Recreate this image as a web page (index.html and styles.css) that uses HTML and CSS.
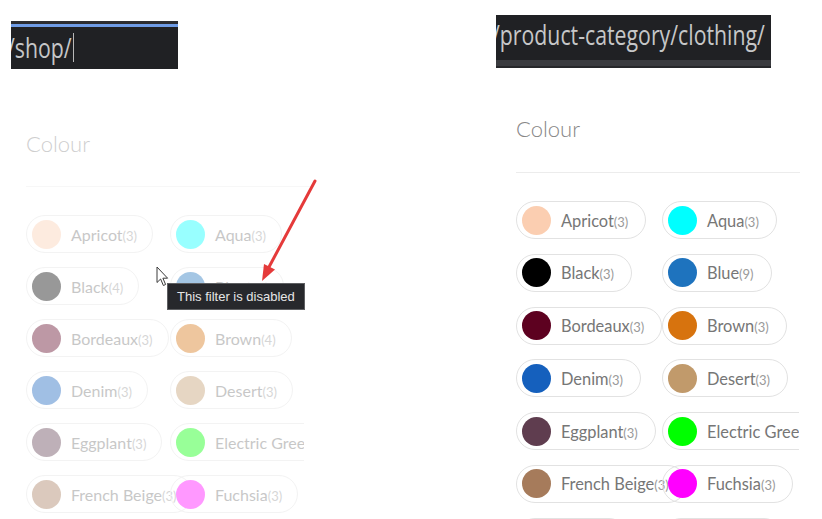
FILE: index.html
```html
<!DOCTYPE html>
<html lang="en">
<head>
    <meta charset="UTF-8">
    <meta name="viewport" content="width=device-width, initial-scale=1.0">
    <title>Colour filter - disabled vs active</title>
    <link rel="stylesheet" href="styles.css">
</head>
<body>
    <main class="compare">
        <!-- /shop/ : filter disabled -->
        <section class="shot shot-left">
            <div class="urlbar urlbar-focused">
                <span class="url">/shop/</span>
            </div>
            <span class="caret"></span>

            <div class="widget widget-disabled">
                <h3 class="widget-title">Colour</h3>
                <ul class="swatches">
                    <li><span class="pill"><span class="dot" style="background:#fbceb1"></span><span class="label"><span class="name">Apricot</span><span class="count">(3)</span></span></span></li>
                    <li><span class="pill"><span class="dot" style="background:#00ffff"></span><span class="label"><span class="name">Aqua</span><span class="count">(3)</span></span></span></li>
                    <li><span class="pill"><span class="dot" style="background:#000000"></span><span class="label"><span class="name">Black</span><span class="count">(4)</span></span></span></li>
                    <li><span class="pill"><span class="dot" style="background:#1e73be"></span><span class="label"><span class="name">Blue</span><span class="count">(10)</span></span></span></li>
                    <li><span class="pill"><span class="dot" style="background:#5d0120"></span><span class="label"><span class="name">Bordeaux</span><span class="count">(3)</span></span></span></li>
                    <li><span class="pill"><span class="dot" style="background:#d7730e"></span><span class="label"><span class="name">Brown</span><span class="count">(4)</span></span></span></li>
                    <li><span class="pill"><span class="dot" style="background:#1560bd"></span><span class="label"><span class="name">Denim</span><span class="count">(3)</span></span></span></li>
                    <li><span class="pill"><span class="dot" style="background:#c19a6b"></span><span class="label"><span class="name">Desert</span><span class="count">(3)</span></span></span></li>
                    <li><span class="pill"><span class="dot" style="background:#5f3d4f"></span><span class="label"><span class="name">Eggplant</span><span class="count">(3)</span></span></span></li>
                    <li><span class="pill"><span class="dot" style="background:#00ff00"></span><span class="label"><span class="name">Electric Green</span><span class="count">(3)</span></span></span></li>
                    <li><span class="pill"><span class="dot" style="background:#a67b5b"></span><span class="label"><span class="name">French Beige</span><span class="count">(3)</span></span></span></li>
                    <li><span class="pill"><span class="dot" style="background:#ff00ff"></span><span class="label"><span class="name">Fuchsia</span><span class="count">(3)</span></span></span></li>
                    <li><span class="pill"><span class="dot" style="background:#808080"></span><span class="label"><span class="name">Gray</span><span class="count">(3)</span></span></span></li>
                    <li><span class="pill"><span class="dot" style="background:#3cb371"></span><span class="label"><span class="name">Green</span><span class="count">(3)</span></span></span></li>
                </ul>
            </div>

            <svg class="cursor" width="13" height="21" viewBox="0 0 13 21">
                <path d="M1 1 L1 16.5 L4.6 13 L7.4 19.5 L9.6 18.5 L6.9 12.2 L11.6 12.2 Z" fill="#fff" stroke="#3a3a3a" stroke-width="1" stroke-linejoin="round"/>
            </svg>

            <svg class="pointer-arrow" width="66" height="112" viewBox="0 0 66 112">
                <line x1="60" y1="6" x2="14" y2="92" stroke="#e53a3a" stroke-width="3" stroke-linecap="round"/>
                <polygon points="7,106 20,94.5 9,89" fill="#e53a3a"/>
            </svg>

            <div class="tooltip">This filter is disabled</div>
        </section>

        <!-- /product-category/clothing/ : filter active -->
        <section class="shot shot-right">
            <div class="urlbar urlbar-plain">
                <span class="url">/product-category/clothing/</span>
            </div>

            <div class="widget">
                <h3 class="widget-title">Colour</h3>
                <ul class="swatches">
                    <li><span class="pill"><span class="dot" style="background:#fbceb1"></span><span class="label"><span class="name">Apricot</span><span class="count">(3)</span></span></span></li>
                    <li><span class="pill"><span class="dot" style="background:#00ffff"></span><span class="label"><span class="name">Aqua</span><span class="count">(3)</span></span></span></li>
                    <li><span class="pill"><span class="dot" style="background:#000000"></span><span class="label"><span class="name">Black</span><span class="count">(3)</span></span></span></li>
                    <li><span class="pill"><span class="dot" style="background:#1e73be"></span><span class="label"><span class="name">Blue</span><span class="count">(9)</span></span></span></li>
                    <li><span class="pill"><span class="dot" style="background:#5d0120"></span><span class="label"><span class="name">Bordeaux</span><span class="count">(3)</span></span></span></li>
                    <li><span class="pill"><span class="dot" style="background:#d7730e"></span><span class="label"><span class="name">Brown</span><span class="count">(3)</span></span></span></li>
                    <li><span class="pill"><span class="dot" style="background:#1560bd"></span><span class="label"><span class="name">Denim</span><span class="count">(3)</span></span></span></li>
                    <li><span class="pill"><span class="dot" style="background:#c19a6b"></span><span class="label"><span class="name">Desert</span><span class="count">(3)</span></span></span></li>
                    <li><span class="pill"><span class="dot" style="background:#5f3d4f"></span><span class="label"><span class="name">Eggplant</span><span class="count">(3)</span></span></span></li>
                    <li><span class="pill"><span class="dot" style="background:#00ff00"></span><span class="label"><span class="name">Electric Green</span><span class="count">(3)</span></span></span></li>
                    <li><span class="pill"><span class="dot" style="background:#a67b5b"></span><span class="label"><span class="name">French Beige</span><span class="count">(3)</span></span></span></li>
                    <li><span class="pill"><span class="dot" style="background:#ff00ff"></span><span class="label"><span class="name">Fuchsia</span><span class="count">(3)</span></span></span></li>
                    <li><span class="pill"><span class="dot" style="background:#808080"></span><span class="label"><span class="name">Gray</span><span class="count">(3)</span></span></span></li>
                    <li><span class="pill"><span class="dot" style="background:#3cb371"></span><span class="label"><span class="name">Green</span><span class="count">(3)</span></span></span></li>
                </ul>
            </div>
        </section>
    </main>
</body>
</html>
```

FILE: styles.css
```css
html, body {
    margin: 0;
    padding: 0;
    background-color: #fff;
}

body {
    width: 822px;
    height: 519px;
    overflow: hidden;
    font-family: Lato, "Liberation Sans", sans-serif;
}

.compare {
    display: flex;
    align-items: flex-start;
}

.shot {
    position: relative;
    flex: none;
}

.shot-left {
    margin-left: 11px;
    padding-top: 21px;
    width: 310px;
    --title-gap: 61px;
    --title-pad: 28px;
    --col: 144px;
    --row-gap: 14px;
    --list-w: 278px;
    --widget-x: 15px;
    --name-size: 16px;
    --pill-pad: 15px;
}

.shot-right {
    margin-left: 175px;
    padding-top: 15px;
    width: 310px;
    --title-gap: 47px;
    --title-pad: 29px;
    --col: 146px;
    --row-gap: 14.8px;
    --list-w: 283px;
    --widget-x: 20px;
    --name-size: 16.4px;
    --pill-pad: 17px;
}

/* browser address bar crops */
.urlbar {
    box-sizing: border-box;
    overflow: hidden;
    white-space: nowrap;
    background-color: #202124;
}

.urlbar-focused {
    width: 167px;
    height: 48px;
    padding-top: 9px;
    border-top: 3px solid #2c2d31;
    box-shadow: inset 0 3px 0 #6f9ce6;
}

.urlbar-plain {
    width: 275px;
    height: 53px;
    padding-top: 5px;
    background: linear-gradient(to bottom, #202124 0, #202124 45px, #3a3b3f 45px, #3a3b3f 51px, #26272a 51px);
}

.url {
    display: inline-block;
    margin-left: -4px;
    font-family: "Open Sans", "Liberation Sans", sans-serif;
    font-size: 28px;
    line-height: 28px;
    color: #c6c7c8;
    transform: scaleX(0.76);
    transform-origin: left center;
}

.caret {
    position: absolute;
    left: 62px;
    top: 33px;
    width: 1px;
    height: 29px;
    background-color: #b8b8b8;
}

/* colour filter widget */
.widget {
    margin-left: var(--widget-x);
    margin-top: var(--title-gap);
    width: 284px;
}

.widget-disabled {
    opacity: 0.4;
}

.widget-title {
    margin: 0;
    padding-bottom: var(--title-pad);
    border-bottom: 1px solid #ececec;
    font-size: 22px;
    line-height: 28px;
    font-weight: 300;
    color: #878787;
}

.swatches {
    list-style: none;
    margin: 28px 0 0;
    padding: 0;
    width: var(--list-w);
    overflow: hidden;
    display: grid;
    grid-template-columns: repeat(2, var(--col));
    row-gap: var(--row-gap);
}

.swatches li {
    min-width: 0;
}

.pill {
    display: inline-flex;
    align-items: center;
    box-sizing: border-box;
    height: 38px;
    padding: 0 var(--pill-pad) 0 5px;
    border: 1px solid #e2e2e2;
    border-radius: 19px;
    white-space: nowrap;
}

.dot {
    flex: none;
    width: 29px;
    height: 29px;
    margin-right: 10px;
    border-radius: 50%;
}

.name {
    font-size: var(--name-size);
    color: #767676;
}

.count {
    font-size: 13px;
    color: #9a9a9a;
}

/* annotation overlays */
.cursor {
    position: absolute;
    left: 145px;
    top: 266px;
}

.pointer-arrow {
    position: absolute;
    left: 244px;
    top: 175px;
}

.tooltip {
    position: absolute;
    left: 156px;
    top: 283px;
    padding: 5px 9px;
    border: 1px solid #5e5f62;
    background-color: #27282c;
    color: #e6e6e6;
    font-family: "Liberation Sans", Arial, sans-serif;
    font-size: 13px;
    line-height: 15px;
    white-space: nowrap;
}
```
